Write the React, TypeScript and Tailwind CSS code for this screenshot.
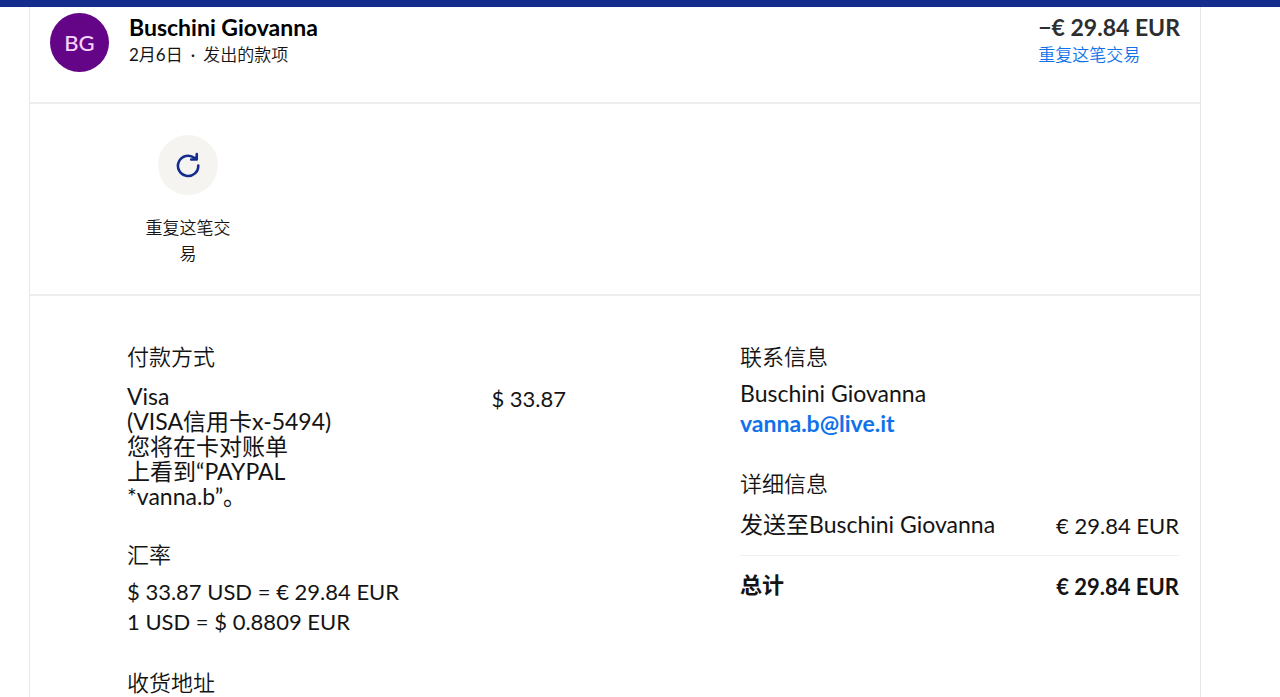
import type { ReactNode } from "react";

function RepeatIcon() {
  return (
    <svg viewBox="0 0 24 24" className="size-7" fill="none" stroke="#142c8e" strokeWidth="2.2" strokeLinecap="round" strokeLinejoin="round" aria-hidden="true">
      <path d="M20.8 12.4A8.7 8.7 0 1 1 17.6 6" />
      <path d="M14.7 7.3h4.8V2.7" />
      <path d="M16.6 7l2.6-2.3V7z" fill="#142c8e" strokeWidth="1" />
    </svg>
  );
}

function Section({ title, children }: { title: string; children?: ReactNode }) {
  return (
    <section>
      <h2 className="text-[22px] leading-7 font-[350]">{title}</h2>
      {children}
    </section>
  );
}

export default function App() {
  return (
    <div className="min-h-screen border-t-7 border-[#142c8e] bg-white font-['Lato','Noto_Sans_CJK_SC',sans-serif] text-[22px] text-[#141414]">
      <main className="mr-[79px] ml-[29px] min-h-[calc(100vh-7px)] border-x border-[#e6e6e6]">
        <header className="flex items-start justify-between border-b-2 border-[#eeeeee] pt-1.5 pr-5 pb-[30px] pl-5">
          <div className="flex items-start gap-5">
            <div className="flex size-[59px] items-center justify-center rounded-full bg-[#640487] font-medium text-[#f7d3fb]">BG</div>
            <div>
              <h1 className="text-[23px] leading-7 font-bold text-black">Buschini Giovanna</h1>
              <p className="flex gap-2 text-[17px] leading-7">
                <span>2月6日</span>
                <span>·</span>
                <span className="font-[350]">发出的款项</span>
              </p>
            </div>
          </div>
          <div>
            <p className="text-[23px] leading-7 font-bold text-[#2c2e2f]">−€ 29.84 EUR</p>
            <a href="#repeat" className="block text-[17px] leading-7 font-[350] text-[#1072eb]">重复这笔交易</a>
          </div>
        </header>

        <div className="border-b-2 border-[#eeeeee] pt-[31px] pb-[27px] pl-[112px]">
          <button type="button" className="flex w-[92px] flex-col items-center gap-5 text-[17px] leading-[26px] font-[350]">
            <span className="flex size-[60px] items-center justify-center rounded-full bg-[#f5f4f0]">
              <RepeatIcon />
            </span>
            <span>重复这笔交易</span>
          </button>
        </div>

        <div className="grid grid-cols-2 gap-[174px] pt-[47px] pr-[21px] pl-[97px]">
          <div className="flex flex-col gap-8">
            <Section title="付款方式">
              <div className="mt-[13px] flex items-start justify-between">
                <p className="text-[23px] leading-[25px]">
                  Visa<br />(VISA信用卡x-5494)<br />您将在卡对账单<br />上看到“PAYPAL<br />*vanna.b”。
                </p>
                <p className="leading-[30px]">$ 33.87</p>
              </div>
            </Section>
            <Section title="汇率">
              <p className="mt-2 leading-[30px]">$ 33.87 USD = € 29.84 EUR<br />1 USD = $ 0.8809 EUR</p>
            </Section>
            <Section title="收货地址" />
          </div>

          <div className="flex flex-col gap-8">
            <Section title="联系信息">
              <p className="mt-[7px] text-[23px] leading-[30px]">Buschini Giovanna</p>
              <a href="mailto:vanna.b@live.it" className="block text-[23px] leading-[30px] font-bold text-[#1072eb]">vanna.b@live.it</a>
            </Section>
            <Section title="详细信息">
              <dl>
                <div className="flex items-end justify-between border-b border-[#f0f0f0] pt-[11px] pb-[14px] leading-[30px]">
                  <dt className="pb-0.5 text-[23px]">发送至Buschini Giovanna</dt>
                  <dd>€ 29.84 EUR</dd>
                </div>
                <div className="flex items-end justify-between pt-[14px] leading-[30px] font-bold">
                  <dt className="pb-0.5">总计</dt>
                  <dd>€ 29.84 EUR</dd>
                </div>
              </dl>
            </Section>
          </div>
        </div>
      </main>
    </div>
  );
}
